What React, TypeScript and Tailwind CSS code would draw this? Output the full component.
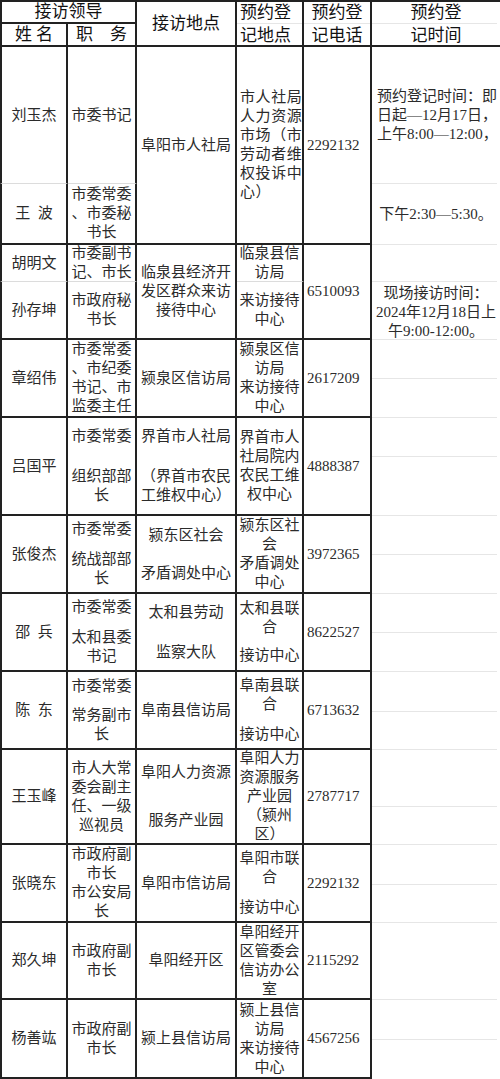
import React from "react";

type Line = string | number;

const gap: Record<number, string> = {
  9: "h-[9px]",
  10: "h-[10px]",
  11: "h-[11px]",
  19: "h-[19px]",
  21: "h-[21px]",
  29: "h-[29px]",
};

const Lines = ({ lines }: { lines: Line[] }) => (
  <>
    {lines.map((l, i) =>
      typeof l === "number" ? (
        <div key={i} className={gap[l]} />
      ) : (
        <div key={i} className="whitespace-pre">
          {l}
        </div>
      )
    )}
  </>
);

const Cell = ({
  pos,
  lines,
  left,
  split,
  first,
  className = "",
}: {
  pos: string;
  lines: Line[];
  left?: boolean;
  split?: boolean;
  first?: boolean;
  className?: string;
}) => (
  <div
    className={`flex flex-col justify-center text-[15px] leading-[19px] text-[#2b2b2b] border-r-2 border-r-[#222] ${
      split ? "border-b border-b-[#dcdcdc]" : "border-b-2 border-b-[#222]"
    } ${first ? "border-l-2 border-l-[#222]" : ""} ${left ? "items-start pl-[3px]" : "items-center"} ${pos} ${className}`}
  >
    <Lines lines={lines} />
  </div>
);

const Note = ({ pos, lines, left }: { pos: string; lines: Line[]; left?: boolean }) => (
  <div
    className={`col-start-6 flex flex-col justify-center text-[15px] leading-[19px] text-[#2b2b2b] ${
      left ? "items-start pl-[5px]" : "items-center"
    } ${pos}`}
  >
    <Lines lines={lines} />
  </div>
);

const grayRows = [
  "row-start-1 row-end-2",
  "row-start-3 row-end-4",
  "row-start-4 row-end-5",
  "row-start-5 row-end-6",
  "row-start-6 row-end-7",
  "row-start-7 row-end-8",
  "row-start-8 row-end-9",
  "row-start-9 row-end-10",
  "row-start-10 row-end-11",
  "row-start-11 row-end-12",
  "row-start-12 row-end-13",
  "row-start-13 row-end-14",
  "row-start-14 row-end-15",
  "row-start-15 row-end-16",
  "row-start-16 row-end-17",
  "row-start-17 row-end-18",
  "row-start-18 row-end-19",
  "row-start-19 row-end-20",
  "row-start-20 row-end-21",
  "row-start-21 row-end-22",
  "row-start-22 row-end-23",
];

const App = () => {
  return (
    <div className="w-[500px] h-[1079px] overflow-hidden bg-white font-['Liberation_Serif','Noto_Sans_CJK_SC',serif]">
      <div className="grid grid-cols-[68px_69px_100px_67px_68px_128px] grid-rows-[24px_23px_137px_61px_37px_58px_39px_39px_39px_59px_39px_39px_39px_39px_40px_38px_57px_38px_40px_38px_77px_40px_39px]">
        {/* faint sheet gridlines */}
        {grayRows.map((r) => (
          <div key={r} className={`col-start-6 mr-[3px] border-b border-b-[#e6e6e6] ${r}`} />
        ))}
        <div className="col-start-4 row-start-1 row-end-2 border-b border-b-[#e6e6e6]" />
        <div className="col-start-5 row-start-1 row-end-2 border-b border-b-[#e6e6e6]" />

        {/* header */}
        <div className="col-start-1 col-end-3 row-start-1 row-end-2 flex items-center justify-center border-2 border-[#222] text-[17px] text-[#111]">
          接访领导
        </div>
        <div className="col-start-1 row-start-2 row-end-3 flex items-center justify-center border-l-2 border-r-2 border-b-2 border-[#222] text-[17px] text-[#111]">
          姓 名
        </div>
        <div className="col-start-2 row-start-2 row-end-3 flex items-center justify-center border-r-2 border-b-2 border-[#222] text-[17px] text-[#111]">
          职　务
        </div>
        <div className="col-start-3 row-start-1 row-end-3 flex items-center justify-center border-t-2 border-r-2 border-b-2 border-[#222] text-[17px] text-[#111]">
          接访地点
        </div>
        <div className="col-start-4 row-start-1 row-end-3 flex flex-col items-start justify-center pl-[3px] border-t-2 border-r-2 border-b-2 border-[#222] text-[17px] leading-[23px] text-[#111]">
          <div>预约登</div>
          <div>记地点</div>
        </div>
        <div className="col-start-5 row-start-1 row-end-3 flex flex-col items-center justify-center border-t-2 border-r-2 border-b-2 border-[#222] text-[17px] leading-[23px] text-[#111]">
          <div>预约登</div>
          <div>记电话</div>
        </div>
        <div className="col-start-6 row-start-1 row-end-3 flex flex-col items-center justify-center border-t-2 border-b-2 border-[#222] text-[17px] leading-[23px] text-[#111]">
          <div>预约登</div>
          <div>记时间</div>
        </div>

        {/* 刘玉杰 / 王波 */}
        <Cell pos="col-start-1 row-start-3 row-end-4" first split lines={["刘玉杰"]} />
        <Cell pos="col-start-1 row-start-4 row-end-5" first lines={["王  波"]} />
        <Cell pos="col-start-2 row-start-3 row-end-4" split lines={["市委书记"]} />
        <Cell pos="col-start-2 row-start-4 row-end-5" lines={["市委常委", "、市委秘", "书长"]} />
        <Cell pos="col-start-3 row-start-3 row-end-5" lines={["阜阳市人社局"]} />
        <Cell
          pos="col-start-4 row-start-3 row-end-5"
          left
          className="tracking-[0.6px]"
          lines={["市人社局", "人力资源", "市场（市", "劳动者维", "权投诉中", "心）"]}
        />
        <Cell pos="col-start-5 row-start-3 row-end-5" left lines={["2292132"]} />
        <Note pos="row-start-3 row-end-4" left lines={["预约登记时间：即", "日起—12月17日，", "上午8:00—12:00，"]} />
        <Note pos="row-start-4 row-end-5" lines={["下午2:30—5:30。"]} />
        <Note pos="row-start-5 row-end-8" lines={["现场接访时间：", "2024年12月18日上", "午9:00-12:00。"]} />

        {/* 胡明文 / 孙存坤 */}
        <Cell pos="col-start-1 row-start-5 row-end-6" first split lines={["胡明文"]} />
        <Cell pos="col-start-1 row-start-6 row-end-7" first lines={["孙存坤"]} />
        <Cell pos="col-start-2 row-start-5 row-end-6" split lines={["市委副书", "记、市长"]} />
        <Cell pos="col-start-2 row-start-6 row-end-7" lines={["市政府秘", "书长"]} />
        <Cell pos="col-start-3 row-start-5 row-end-7" lines={["临泉县经济开", "发区群众来访", "接待中心"]} />
        <Cell pos="col-start-4 row-start-5 row-end-6" split lines={["临泉县信", "访局"]} />
        <Cell pos="col-start-4 row-start-6 row-end-7" lines={["来访接待", "中心"]} />
        <Cell pos="col-start-5 row-start-5 row-end-7" left lines={["6510093"]} />

        {/* 章绍伟 */}
        <Cell pos="col-start-1 row-start-7 row-end-9" first lines={["章绍伟"]} />
        <Cell pos="col-start-2 row-start-7 row-end-9" lines={["市委常委", "、市纪委", "书记、市", "监委主任"]} />
        <Cell pos="col-start-3 row-start-7 row-end-9" lines={["颍泉区信访局"]} />
        <Cell pos="col-start-4 row-start-7 row-end-9" lines={["颍泉区信", "访局", "来访接待", "中心"]} />
        <Cell pos="col-start-5 row-start-7 row-end-9" left lines={["2617209"]} />

        {/* 吕国平 */}
        <Cell pos="col-start-1 row-start-9 row-end-11" first lines={["吕国平"]} />
        <Cell pos="col-start-2 row-start-9 row-end-11" lines={["市委常委", 21, "组织部部", "长"]} />
        <Cell pos="col-start-3 row-start-9 row-end-11" lines={["界首市人社局", 21, "（界首市农民", "工维权中心）"]} />
        <Cell pos="col-start-4 row-start-9 row-end-11" lines={["界首市人", "社局院内", "农民工维", "权中心"]} />
        <Cell pos="col-start-5 row-start-9 row-end-11" left lines={["4888387"]} />

        {/* 张俊杰 */}
        <Cell pos="col-start-1 row-start-11 row-end-13" first lines={["张俊杰"]} />
        <Cell pos="col-start-2 row-start-11 row-end-13" lines={["市委常委", 11, "统战部部", "长"]} />
        <Cell pos="col-start-3 row-start-11 row-end-13" lines={["颍东区社会", 19, "矛盾调处中心"]} />
        <Cell pos="col-start-4 row-start-11 row-end-13" lines={["颍东区社", "会", "矛盾调处", "中心"]} />
        <Cell pos="col-start-5 row-start-11 row-end-13" left lines={["3972365"]} />

        {/* 邵兵 */}
        <Cell pos="col-start-1 row-start-13 row-end-15" first lines={["邵  兵"]} />
        <Cell pos="col-start-2 row-start-13 row-end-15" lines={["市委常委", 11, "太和县委", "书记"]} />
        <Cell pos="col-start-3 row-start-13 row-end-15" lines={["太和县劳动", 21, "监察大队"]} />
        <Cell pos="col-start-4 row-start-13 row-end-15" lines={["太和县联", "合", 9, "接访中心"]} />
        <Cell pos="col-start-5 row-start-13 row-end-15" left lines={["8622527"]} />

        {/* 陈东 */}
        <Cell pos="col-start-1 row-start-15 row-end-17" first lines={["陈  东"]} />
        <Cell pos="col-start-2 row-start-15 row-end-17" lines={["市委常委", 10, "常务副市", "长"]} />
        <Cell pos="col-start-3 row-start-15 row-end-17" lines={["阜南县信访局"]} />
        <Cell pos="col-start-4 row-start-15 row-end-17" lines={["阜南县联", "合", 11, "接访中心"]} />
        <Cell pos="col-start-5 row-start-15 row-end-17" left lines={["6713632"]} />

        {/* 王玉峰 */}
        <Cell pos="col-start-1 row-start-17 row-end-19" first lines={["王玉峰"]} />
        <Cell pos="col-start-2 row-start-17 row-end-19" lines={["市人大常", "委会副主", "任、一级", "巡视员"]} />
        <Cell pos="col-start-3 row-start-17 row-end-19" lines={["阜阳人力资源", 29, "服务产业园"]} />
        <Cell pos="col-start-4 row-start-17 row-end-19" lines={["阜阳人力", "资源服务", "产业园", "（颍州", "区）"]} />
        <Cell pos="col-start-5 row-start-17 row-end-19" left lines={["2787717"]} />

        {/* 张晓东 */}
        <Cell pos="col-start-1 row-start-19 row-end-21" first lines={["张晓东"]} />
        <Cell pos="col-start-2 row-start-19 row-end-21" lines={["市政府副", "市长", "市公安局", "长"]} />
        <Cell pos="col-start-3 row-start-19 row-end-21" lines={["阜阳市信访局"]} />
        <Cell pos="col-start-4 row-start-19 row-end-21" lines={["阜阳市联", "合", 11, "接访中心"]} />
        <Cell pos="col-start-5 row-start-19 row-end-21" left lines={["2292132"]} />

        {/* 郑久坤 */}
        <Cell pos="col-start-1 row-start-21 row-end-22" first lines={["郑久坤"]} />
        <Cell pos="col-start-2 row-start-21 row-end-22" lines={["市政府副", "市长"]} />
        <Cell pos="col-start-3 row-start-21 row-end-22" lines={["阜阳经开区"]} />
        <Cell pos="col-start-4 row-start-21 row-end-22" lines={["阜阳经开", "区管委会", "信访办公", "室"]} />
        <Cell pos="col-start-5 row-start-21 row-end-22" left lines={["2115292"]} />

        {/* 杨善竑 */}
        <Cell pos="col-start-1 row-start-22 row-end-24" first lines={["杨善竑"]} />
        <Cell pos="col-start-2 row-start-22 row-end-24" lines={["市政府副", "市长"]} />
        <Cell pos="col-start-3 row-start-22 row-end-24" lines={["颍上县信访局"]} />
        <Cell pos="col-start-4 row-start-22 row-end-24" lines={["颍上县信", "访局", "来访接待", "中心"]} />
        <Cell pos="col-start-5 row-start-22 row-end-24" left lines={["4567256"]} />
      </div>
    </div>
  );
};

export default App;
